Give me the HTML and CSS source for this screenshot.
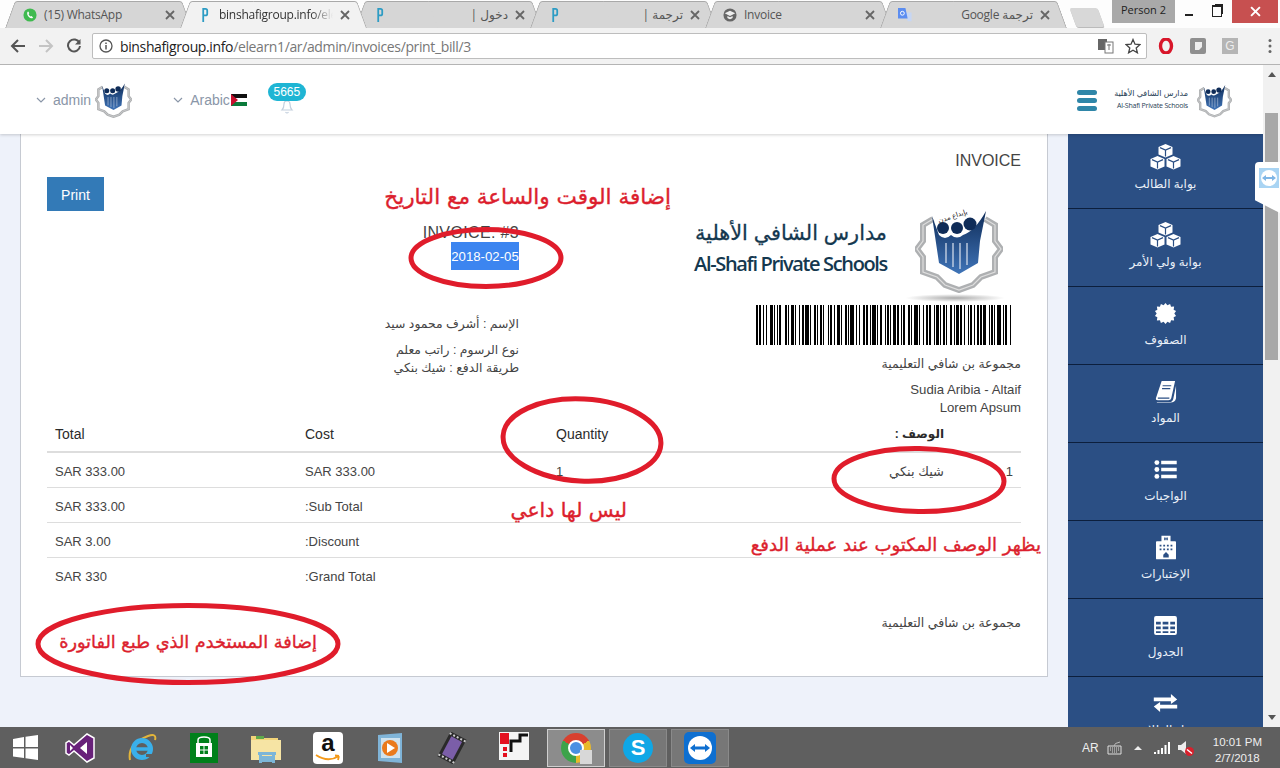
FILE: index.html
```html
<!DOCTYPE html>
<html lang="ar">
<head>
	<meta charset="UTF-8">
	<title>Invoice</title>
	<link rel="stylesheet" href="styles.css">
</head>
<body>
<svg class="defs" width="0" height="0">
	<defs>
		<linearGradient id="blueBody" x1="0" y1="0" x2="0" y2="1">
			<stop offset="0" stop-color="#0f2c58"/>
			<stop offset="1" stop-color="#3f74b8"/>
		</linearGradient>
		<symbol id="emblem" viewBox="0 0 88 88">
			<path d="M18 14L8 20V36L2 44L8 52V67L22 72L30 80L44 85L58 80L66 72L80 67V52L86 44L80 36V20L70 14" fill="none" stroke="#aeb0b2" stroke-width="6"/>
			<path d="M18 14L8 20V36L2 44L8 52V67L22 72L30 80L44 85L58 80L66 72L80 67V52L86 44L80 36V20L70 14" fill="none" stroke="#dedede" stroke-width="1.200"/>
			<path d="M17 11L24 30Q30 36 36 30Q42 35 48 30Q60 26 71 6L65 36L63 58L44 69L24 58Z" fill="url(#blueBody)"/>
			<path d="M31 38V58M38 38V62M45 38V64M52 38V60" stroke="#cfd9e8" stroke-width="1.300"/>
			<circle cx="28" cy="23" r="6" fill="#0f2c58"/>
			<circle cx="42" cy="23" r="6" fill="#0f2c58"/>
			<circle cx="55" cy="19" r="6.500" fill="#0f2c58"/>
		</symbol>
		<symbol id="cubes" viewBox="0 0 30 26">
			<path d="M15 0L22 3V10.500L15 13.500L8 10.500V3Z M7 12L14 15V22.500L7 25.500L0 22.500V15Z M23 12L30 15V22.500L23 25.500L16 22.500V15Z" fill="#fff"/>
			<path d="M9.500 3.600L15 6L20.500 3.600M15 6.200V12.500M1.500 15.600L7 18L12.500 15.600M7 18.200V24.500M17.500 15.600L23 18L28.500 15.600M23 18.200V24.500" fill="none" stroke="#2b4f84" stroke-width="1.200"/>
		</symbol>
		<symbol id="tabP" viewBox="0 0 10 18">
			<path d="M3 1V17M3 2H5.500A2 2 0 0 1 7.500 4V7.500A2 2 0 0 1 5.500 9.500H3" fill="none" stroke="#2d9cc4" stroke-width="2"/>
		</symbol>
		<symbol id="closeX" viewBox="0 0 10 10">
			<path d="M1 1L9 9M9 1L1 9" stroke="#666" stroke-width="1.800"/>
		</symbol>
	</defs>
</svg>

<div class="tabstrip">
	<div class="tabs">
		<div class="tab">
			<svg class="tab-icon" viewBox="0 0 16 16"><circle cx="8" cy="8" r="7.500" fill="#3fba4f"/><path d="M5 4.500Q4 8 7 10.500Q9.500 12.500 11.500 11L10 9L8.800 9.800Q6.800 8.500 6.300 6.800L7.200 6L6 4Z" fill="#fff"/></svg>
			<span class="tab-label">(15) WhatsApp</span>
			<svg class="tab-close"><use href="#closeX"/></svg>
		</div>
		<div class="tab tab-active">
			<svg class="tab-icon"><use href="#tabP"/></svg>
			<span class="tab-label tab-fade">binshafigroup.info/elearn1</span>
			<svg class="tab-close"><use href="#closeX"/></svg>
		</div>
		<div class="tab">
			<svg class="tab-icon"><use href="#tabP"/></svg>
			<span class="tab-label" dir="rtl">دخول |</span>
			<svg class="tab-close"><use href="#closeX"/></svg>
		</div>
		<div class="tab">
			<svg class="tab-icon"><use href="#tabP"/></svg>
			<span class="tab-label" dir="rtl">ترجمة |</span>
			<svg class="tab-close"><use href="#closeX"/></svg>
		</div>
		<div class="tab">
			<svg class="tab-icon" viewBox="0 0 16 16"><circle cx="8" cy="8" r="7.500" fill="#666"/><path d="M2 6L8 3L14 6L8 9Z" fill="#eee"/><path d="M5 9V11.500Q8 14 11 11.500V9L8 10.500Z" fill="#eee"/></svg>
			<span class="tab-label">Invoice</span>
			<svg class="tab-close"><use href="#closeX"/></svg>
		</div>
		<div class="tab">
			<svg class="tab-icon" viewBox="0 0 16 16"><path d="M8 5H15.500V15H11Z" fill="#c6d6f4"/><path d="M0 0H8.500L11 12H0Z" fill="#5c8df0"/><circle cx="5" cy="6" r="2.200" fill="none" stroke="#fff" stroke-width="1.100"/></svg>
			<span class="tab-label" dir="rtl">ترجمة Google</span>
			<svg class="tab-close"><use href="#closeX"/></svg>
		</div>
		<div class="newtab"></div>
	</div>
	<div class="window-controls">
		<span class="person">Person 2</span>
		<span class="win-btn"><i class="win-min"></i></span>
		<span class="win-btn"><i class="win-max"></i></span>
		<span class="win-close"><svg width="11" height="11" viewBox="0 0 10 10"><path d="M1 1L9 9M9 1L1 9" stroke="#fff" stroke-width="1.800"/></svg></span>
	</div>
</div>

<div class="toolbar">
	<svg class="nav-icon" viewBox="0 0 16 16"><path d="M15 8H2M8 2L2 8L8 14" fill="none" stroke="#555" stroke-width="2"/></svg>
	<svg class="nav-icon" viewBox="0 0 16 16"><path d="M1 8H14M8 2L14 8L8 14" fill="none" stroke="#c4c4c4" stroke-width="2"/></svg>
	<svg class="nav-icon" viewBox="0 0 16 16"><path d="M13.500 5A6 6 0 1 0 14 8" fill="none" stroke="#555" stroke-width="2"/><path d="M14.500 1V6.500H9Z" fill="#555"/></svg>
	<div class="omnibox">
		<svg class="info-icon" viewBox="0 0 14 14"><circle cx="7" cy="7" r="6" fill="none" stroke="#555" stroke-width="1.300"/><path d="M7 6V10.500M7 3.500V5" stroke="#555" stroke-width="1.500"/></svg>
		<span class="url"><b>binshafigroup.info</b>/elearn1/ar/admin/invoices/print_bill/3</span>
		<svg class="omni-icon" viewBox="0 0 16 16"><rect x="0" y="1" width="9" height="11" fill="#666"/><rect x="7" y="4" width="8" height="11" fill="#fff" stroke="#777"/><path d="M9 7H13M11 6V12" stroke="#777"/></svg>
		<svg class="omni-icon" viewBox="0 0 16 16"><path d="M8 1.500L10 6.200L15 6.600L11.200 9.900L12.400 14.800L8 12.200L3.600 14.800L4.800 9.900L1 6.600L6 6.200Z" fill="none" stroke="#444" stroke-width="1.300"/></svg>
	</div>
	<div class="ext-icons">
		<svg class="ext" viewBox="0 0 16 16"><ellipse cx="8" cy="8" rx="5.500" ry="7" fill="none" stroke="#d8162a" stroke-width="3.400"/></svg>
		<svg class="ext" viewBox="0 0 16 16"><rect width="16" height="16" rx="2" fill="#8f8f8f"/><path d="M5 4H12V9L9 12H5Z" fill="#eee"/></svg>
		<span class="ext-g">G</span>
		<svg class="ext-menu" viewBox="0 0 4 16"><circle cx="2" cy="2.500" r="1.500"/><circle cx="2" cy="8" r="1.500"/><circle cx="2" cy="13.500" r="1.500"/></svg>
	</div>
</div>

<div class="page">
	<div class="viewport">
		<header class="topbar">
			<div class="top-left">
				<div class="user-menu">
					<svg class="chevron" viewBox="0 0 10 6"><path d="M1 1L5 5L9 1" fill="none" stroke="#8a96a8" stroke-width="1.200"/></svg>
					<span>admin</span>
					<svg class="avatar"><use href="#emblem"/></svg>
				</div>
				<div class="lang-menu">
					<svg class="chevron" viewBox="0 0 10 6"><path d="M1 1L5 5L9 1" fill="none" stroke="#8a96a8" stroke-width="1.200"/></svg>
					<span>Arabic</span>
					<svg class="flag" viewBox="0 0 16 12"><rect width="16" height="4" fill="#111"/><rect y="4" width="16" height="4" fill="#fff"/><rect y="8" width="16" height="4" fill="#0a7a3a"/><path d="M0 0L7 6L0 12Z" fill="#c8102e"/></svg>
				</div>
				<div class="notify">
					<svg class="bell" viewBox="0 0 16 16"><path d="M3 11Q5 9 5 5Q5 2 8 2Q11 2 11 5Q11 9 13 11Z M6.500 13Q8 15 9.500 13" fill="none" stroke="#c4d0de" stroke-width="1.200"/></svg>
					<span class="badge">5665</span>
				</div>
			</div>
			<div class="top-right">
				<div class="burger"><i></i><i></i><i></i></div>
				<div class="top-logo-text">
					<span class="top-logo-ar">مدارس الشافي الأهلية</span>
					<span class="top-logo-en">Al-Shafi Private Schools</span>
				</div>
				<svg class="top-logo-mark"><use href="#emblem"/></svg>
			</div>
		</header>

		<div class="main">
			<section class="card">
				<h1 class="card-title">INVOICE</h1>
				<div class="invoice-head">
					<div class="head-left">
						<button class="print-btn">Print</button>
						<div class="invoice-meta">
							<div class="invoice-no">INVOICE: #3</div>
							<div class="invoice-date"><span>2018-02-05</span></div>
							<div class="meta-name" dir="rtl">الإسم : أشرف محمود سيد</div>
							<div class="meta-lines" dir="rtl">
								<div>نوع الرسوم : راتب معلم</div>
								<div>طريقة الدفع : شيك بنكي</div>
							</div>
						</div>
					</div>
					<div class="head-right">
						<div class="school-logo">
							<div class="school-name">
								<span class="school-ar">مدارس الشافي الأهلية</span>
								<span class="school-en">Al-Shafi Private Schools</span>
							</div>
							<svg class="school-mark" viewBox="0 0 88 86">
								<use href="#emblem" width="88" height="88"/>
								<text class="mark-motto" x="24" y="18" transform="rotate(-18 24 18)">بإبداع مدن</text>
							</svg>
						</div>
						<div class="logo-shadow"></div>
						<svg class="barcode" width="255" height="40" viewBox="0 0 255 40">
							<path d="M0 20H255" stroke="#000" stroke-width="40" fill="none" stroke-dasharray="2 1 2 2 1 2 1 3 3 1 1 2 1 1 2 4 2 1 1 2 3 1 1 3 1 2 2 1 4 1 1 3 2 1 1 2 2 1 1 4 1 1 2 2 1 2 3 1 1 3 2 1 1 1 4 2 1 2 1 3 2 1 2 2 1 1 4 1 1 2 2 3 1 1 2 1 1 2 3 1 2 2 1 1 2 3 2 1 1 2 4 1 1 3 1 2 2 1 2 3 1 1 3 1 1 2 2 1 1 3 2 2 1 1 3 1 2 2 1 3 1 1 2"/>
						</svg>
						<div class="school-group" dir="rtl">مجموعة بن شافي التعليمية</div>
						<div class="school-address">Sudia Aribia - Altaif<br>Lorem Apsum</div>
					</div>
				</div>

				<table class="items">
					<colgroup><col class="col-total"><col class="col-cost"><col class="col-qty"><col class="col-desc"><col class="col-num"></colgroup>
					<thead>
						<tr><th>Total</th><th>Cost</th><th>Quantity</th><th class="cell-right" dir="rtl">الوصف :</th><th></th></tr>
					</thead>
					<tbody>
						<tr><td>SAR 333.00</td><td>SAR 333.00</td><td>1</td><td class="cell-right" dir="rtl">شيك بنكي</td><td class="cell-end">1</td></tr>
						<tr><td>SAR 333.00</td><td>:Sub Total</td><td></td><td></td><td></td></tr>
						<tr><td>SAR 3.00</td><td>:Discount</td><td></td><td></td><td></td></tr>
						<tr class="row-last"><td>SAR 330</td><td>:Grand Total</td><td></td><td></td><td></td></tr>
					</tbody>
				</table>
				<div class="card-foot" dir="rtl">مجموعة بن شافي التعليمية</div>
			</section>

			<nav class="sidebar">
				<a class="side-item"><span class="side-glyph"><svg width="31" height="26"><use href="#cubes"/></svg></span><span class="side-label">بوابة الطالب</span></a>
				<a class="side-item"><span class="side-glyph"><svg width="31" height="26"><use href="#cubes"/></svg></span><span class="side-label">بوابة ولي الأمر</span></a>
				<a class="side-item"><span class="side-glyph"><svg width="23" height="23" viewBox="0 0 24 24"><path d="M12 1L14 3.500L16.800 2L17.800 5L21 4.800L20.500 8L23 9.500L21.200 12L23 14.500L20.500 16L21 19.200L17.800 19L16.800 22L14 20.500L12 23L10 20.500L7.200 22L6.200 19L3 19.200L3.500 16L1 14.500L2.800 12L1 9.500L3.500 8L3 4.800L6.200 5L7.200 2L10 3.500Z" fill="#fff"/></svg></span><span class="side-label">الصفوف</span></a>
				<a class="side-item"><span class="side-glyph"><svg width="23" height="23" viewBox="0 0 24 24"><path d="M8 1H22L18 19Q17.500 21 15 21H4Q1.500 21 2 19Z" fill="#fff"/><path d="M3 23H16Q19 23 20 20L23 6V19Q22 23.500 17 23.500H3Z" fill="#fff"/><path d="M9 6H18M8.400 9H17M4 19H16" stroke="#2b4f84" stroke-width="1.300"/></svg></span><span class="side-label">المواد</span></a>
				<a class="side-item"><span class="side-glyph"><svg width="25" height="19" viewBox="0 0 26 22"><circle cx="3" cy="3" r="2.800" fill="#fff"/><circle cx="3" cy="11" r="2.800" fill="#fff"/><circle cx="3" cy="19" r="2.800" fill="#fff"/><path d="M8 1H26V5H8ZM8 9H26V13H8ZM8 17H26V21H8Z" fill="#fff"/></svg></span><span class="side-label">الواجبات</span></a>
				<a class="side-item"><span class="side-glyph"><svg width="20" height="25" viewBox="0 0 22 26"><path fill-rule="evenodd" fill="#fff" d="M6 0H16V6H21Q22 6 22 7V25Q22 26 21 26H1Q0 26 0 25V7Q0 6 1 6H6Z M8 21V24H14V21L11 18Z M4 10V12H6V10Z M8 10V12H10V10Z M12 10V12H14V10Z M16 10V12H18V10Z M4 14V16H6V14Z M8 14V16H10V14Z M12 14V16H14V14Z M16 14V16H18V14Z M9 2V5H10.500V4H11.500V5H13V2H11.500V3H10.500V2Z"/></svg></span><span class="side-label">الإختبارات</span></a>
				<a class="side-item"><span class="side-glyph"><svg width="23" height="19" viewBox="0 0 24 20"><path fill-rule="evenodd" fill="#fff" d="M2 0H22Q24 0 24 2V18Q24 20 22 20H2Q0 20 0 18V2Q0 0 2 0Z M2 6V9H7V6Z M9 6V9H15V6Z M17 6V9H22V6Z M2 11V14H7V11Z M9 11V14H15V11Z M17 11V14H22V11Z M2 16V18H7V16Z M9 16V18H15V16Z M17 16V18H22V16Z"/></svg></span><span class="side-label">الجدول</span></a>
				<a class="side-item"><span class="side-glyph"><svg width="25" height="18" viewBox="0 0 26 20"><path d="M0 4H19V0L26 6L19 11V8H0ZM26 12H7V9L0 14L7 20V16H26Z" fill="#fff"/></svg></span><span class="side-label">نقل الطلاب</span></a>
			</nav>
		</div>
	</div>
	<div class="scrollbar">
		<span class="arrow-up"></span>
		<div class="thumb"></div>
		<span class="arrow-down"></span>
	</div>
</div>

<div class="taskbar">
	<div class="task-start">
		<svg width="25" height="25" viewBox="0 0 25 25"><path d="M0 4L11 2V12H0ZM12.500 1.800L25 0V12H12.500ZM0 13.500H11V23L0 21.500ZM12.500 13.500H25V25L12.500 23.200Z" fill="#fff"/></svg>
	</div>
	<div class="task"><svg width="30" height="32" viewBox="0 0 30 32"><path d="M22 2L29 6V26L22 30L9 19L4 23L1 21V11L4 9L9 13Z" fill="#68217a" stroke="#fff" stroke-width="1.500"/><path d="M22 10L15 16L22 22ZM5 13V19L8 16Z" fill="#fff"/></svg></div>
	<div class="task"><svg width="32" height="32" viewBox="0 0 32 32"><path d="M4 28Q1 12 22 4Q31 1 29 8" fill="none" stroke="#e3b53a" stroke-width="2"/><circle cx="16" cy="17" r="8.500" fill="none" stroke="#3ab0ea" stroke-width="5"/><path d="M9 17H25" stroke="#3ab0ea" stroke-width="3.500"/><path d="M20 22H28V25H20Z" fill="#5f5f5f"/></svg></div>
	<div class="task"><svg width="28" height="30" viewBox="0 0 28 30"><rect width="28" height="30" fill="#00801a"/><path d="M8 11V7Q8 4 14 4Q20 4 20 7V11" fill="none" stroke="#fff" stroke-width="1.500"/><path d="M6 10H22V24H6Z" fill="#fff"/><path d="M10 13H13.500V16.500H10ZM14.500 13H18V16.500H14.500ZM10 17.500H13.500V21H10ZM14.500 17.500H18V21H14.500Z" fill="#00801a"/></svg></div>
	<div class="task"><svg width="32" height="32" viewBox="0 0 32 32"><path d="M1 4H12L14 6H28V14H1Z" fill="#f2d479"/><path d="M1 8H31V28H1Z" fill="#f6e4a4"/><path d="M6 4H14V7H6Z" fill="#5ea94b"/><path d="M8 20H26V23H8ZM9 23H12V31H9ZM22 23H25V31H22ZM12 24H22V30H12Z" fill="#7cb6d8"/></svg></div>
	<div class="task"><div class="amazon-tile"><span>a</span><svg width="26" height="8" viewBox="0 0 26 8"><path d="M1 1Q13 9 24 2M24 2L20 1.500M24 2L23 6" fill="none" stroke="#f49a1a" stroke-width="1.800"/></svg></div></div>
	<div class="task"><svg width="28" height="32" viewBox="0 0 28 32"><path d="M2 3L26 1V31L2 29Z" fill="#7fb4d8"/><path d="M5 6H24V26H5Z" fill="#cfe2ee"/><circle cx="14" cy="16" r="8" fill="#ea7a1c"/><path d="M11 11L19 16L11 21Z" fill="#fff"/></svg></div>
	<div class="task"><svg width="30" height="32" viewBox="0 0 30 32"><g transform="rotate(28 15 16)"><rect x="6" y="2" width="18" height="28" fill="#2a2a2a"/><path d="M9 6H21V26H9Z" fill="#7b5ea8"/><path d="M6 4H24M6 28H24" stroke="#ccc" stroke-width="2" stroke-dasharray="2 2"/></g></svg></div>
	<div class="task"><svg width="30" height="32" viewBox="0 0 30 32"><rect width="30" height="28" fill="#f4f4f4"/><path d="M1 1H10V12H1ZM4 15H8V19H4ZM4 21H8V25H4Z" fill="#e4101f"/><path d="M12 20V9H21V3H29" fill="none" stroke="#111" stroke-width="3"/></svg></div>
	<div class="task task-active"><div class="chrome-mark"><i></i></div><span class="chrome-user"></span></div>
	<div class="task task-open"><div class="skype-mark">S</div></div>
	<div class="task task-open"><svg width="32" height="32" viewBox="0 0 32 32"><rect width="32" height="32" rx="5" fill="#0e6fd0"/><circle cx="16" cy="16" r="12" fill="#fff"/><path d="M6 16L11 12V14.500H21V12L26 16L21 20V17.500H11V20Z" fill="#0e6fd0"/></svg></div>
	<div class="tray">
		<span class="tray-lang">AR</span>
		<svg width="15" height="14" viewBox="0 0 15 14"><path d="M1 5H14V13H1Z" fill="none" stroke="#ddd"/><path d="M3 7H12M3 9H12M5 11H10" stroke="#ddd" stroke-dasharray="1 1"/><path d="M7 5Q7 2 13 1" fill="none" stroke="#bbb"/></svg>
		<span class="tray-caret"></span>
		<svg width="16" height="12" viewBox="0 0 16 12"><path d="M0 10H2V12H0ZM3.500 8H5.500V12H3.500ZM7 6H9V12H7ZM10.500 3H12.500V12H10.500ZM14 0H16V12H14Z" fill="#fff"/></svg>
		<svg width="16" height="16" viewBox="0 0 16 16"><path d="M0 5H3L8 1V14L3 10H0Z" fill="#eee"/><circle cx="11.500" cy="11.500" r="4.500" fill="#d8202c"/><path d="M9 9.500L14 13.500" stroke="#fff" stroke-width="1.500"/></svg>
		<div class="clock"><div>10:01 PM</div><div>2/7/2018</div></div>
	</div>
</div>

<div class="tv-tab"><svg width="20" height="20" viewBox="0 0 20 20"><rect width="20" height="20" fill="#a9d4f3"/><circle cx="10" cy="10" r="8" fill="#fff"/><path d="M3 10L7 7V9H13V7L17 10L13 13V11H7V13Z" fill="#7fb6e6"/></svg></div>

<svg class="marks" width="1280" height="768" viewBox="0 0 1280 768">
	<ellipse cx="486" cy="258" rx="75" ry="28.500"/>
	<ellipse cx="582" cy="440" rx="79" ry="41" transform="rotate(3 582 440)"/>
	<ellipse cx="919" cy="480" rx="85" ry="31.500" transform="rotate(1 919 480)"/>
	<ellipse cx="188" cy="644" rx="150" ry="38.500"/>
</svg>
<div class="note note-date" dir="rtl">إضافة الوقت والساعة مع التاريخ</div>
<div class="note note-qty" dir="rtl">ليس لها داعي</div>
<div class="note note-desc" dir="rtl">يظهر الوصف المكتوب عند عملية الدفع</div>
<div class="note note-user" dir="rtl">إضافة المستخدم الذي طبع الفاتورة</div>
</body>
</html>
```

FILE: styles.css
```css
html,body{margin:0;padding:0;}
body{width:1280px;height:768px;overflow:hidden;position:relative;display:flex;flex-direction:column;background:#fff;font-family:"Liberation Sans","DejaVu Sans",sans-serif;color:#444;}
.defs{position:absolute;}
h1{margin:0;font-weight:normal;}
svg{display:block;flex:none;}

/* browser tabs */
.tabstrip{height:28px;flex:none;display:flex;justify-content:space-between;background:#fdfdfd;}
.tabs{display:flex;align-items:flex-end;padding-left:5px;}
.tab{position:relative;width:187px;height:27px;margin-right:-12px;padding:0 17px 0 18px;box-sizing:border-box;display:flex;align-items:center;gap:7px;font:12px "Open Sans","DejaVu Sans",sans-serif;letter-spacing:-.25px;color:#555;z-index:1;}
.tab:before,.tab:after{content:'';position:absolute;top:0;bottom:0;width:55%;background:#d6d6d6;border-top:1px solid #a9a9a9;z-index:-1;}
.tab:before{left:0;border-left:1px solid #a9a9a9;transform:skewX(-20deg);transform-origin:0 100%;border-radius:3px 0 0 0;}
.tab:after{right:0;border-right:1px solid #a9a9a9;transform:skewX(20deg);transform-origin:100% 100%;border-radius:0 3px 0 0;}
.tab-active{z-index:2;color:#333;}
.tab-active:before,.tab-active:after{background:#f2f2f2;}
.tab-icon{width:14px;height:16px;}
.tab-label{flex:1;overflow:hidden;white-space:nowrap;}
.tab-fade{-webkit-mask-image:linear-gradient(to left,transparent,#000 22px);mask-image:linear-gradient(to left,transparent,#000 22px);}
.tab-close{width:10px;height:10px;}
.newtab{width:28px;height:19px;margin-left:18px;margin-bottom:1px;background:#d8d8d8;border-radius:2px;transform:skewX(20deg);box-shadow:0 1px 0 #bbb;}
.window-controls{display:flex;align-items:flex-start;padding-right:2px;}
.person{width:63px;height:23px;background:#a9a9a9;color:#222;font:11px/20px "Open Sans",sans-serif;text-align:center;}
.win-btn{width:28px;height:21px;display:flex;align-items:center;justify-content:center;}
.win-btn+.win-btn{margin-right:1px;}
.win-min{display:block;width:8px;height:2px;background:#222;margin-top:8px;}
.win-max{display:block;width:8px;height:9px;border:1px solid #222;border-top-width:2px;box-shadow:2px -2px 0 -1px #222;}
.win-close{width:46px;height:23px;background:#c75050;display:flex;align-items:center;justify-content:center;}

/* toolbar */
.toolbar{height:37px;flex:none;box-sizing:border-box;display:flex;align-items:center;padding:0 0 0 10px;background:#f2f2f2;border-bottom:1px solid #b4b4b4;}
.nav-icon{width:16px;height:16px;margin-right:12px;}
.omnibox{width:1055px;height:26px;margin-left:-2px;box-sizing:border-box;display:flex;align-items:center;background:#fff;border:1px solid #bdbdbd;border-radius:2px;padding:0 5px 0 6px;gap:11px;}
.info-icon{width:14px;height:14px;margin-right:-4px;}
.url{flex:1;font:14px "Open Sans","DejaVu Sans",sans-serif;letter-spacing:-.37px;color:#777;white-space:nowrap;}
.url b{font-weight:normal;color:#222;}
.omni-icon{width:16px;height:16px;}
.ext-icons{flex:1;display:flex;align-items:center;padding-left:11px;gap:16px;}
.ext{width:16px;height:16px;}
.ext-g{width:16px;height:16px;background:#b5b5b5;color:#eee;font:12px/16px "Liberation Sans",sans-serif;text-align:center;}
.ext-menu{width:4px;height:16px;margin-left:14px;fill:#666;}

/* page */
.page{height:662px;flex:none;display:flex;}
.viewport{flex:1;display:flex;flex-direction:column;overflow:hidden;background:#eef2fa;}
.topbar{height:69px;flex:none;position:relative;z-index:2;display:flex;justify-content:space-between;align-items:center;background:#fff;box-shadow:0 1px 3px rgba(0,0,0,.18);}
.top-left{display:flex;align-items:center;padding-left:36px;font-size:14px;color:#8a96a8;}
.user-menu,.lang-menu{display:flex;align-items:center;}
.chevron{width:10px;height:6px;margin-right:7px;}
.avatar{width:37px;height:37px;margin-left:4px;}
.lang-menu{margin-left:41px;}
.flag{width:16px;height:12px;margin-left:1px;}
.notify{position:relative;width:38px;height:30px;margin-left:21px;}
.badge{position:absolute;left:0;top:-2px;width:38px;height:18px;border-radius:9px;background:#1fb5d4;color:#fff;font-size:12px;line-height:18px;text-align:center;}
.bell{position:absolute;left:11px;top:14px;width:16px;height:16px;}
.top-right{display:flex;align-items:center;padding-right:31px;}
.burger{display:flex;flex-direction:column;gap:3px;width:20px;margin:2px 19px 0 0;}
.burger i{display:block;height:5px;border-radius:3px;background:#2f86a8;}
.top-logo-text{display:flex;flex-direction:column;align-items:flex-end;width:72px;margin-right:9px;color:#1f3d55;white-space:nowrap;}
.top-logo-ar{font-size:8px;line-height:12px;}
.top-logo-en{font:7px/12px "Open Sans",sans-serif;letter-spacing:-.2px;}
.top-logo-mark{width:35px;height:36px;}

.main{flex:1;display:flex;align-items:flex-start;padding-left:20px;gap:20px;min-height:0;}
.card{width:1028px;height:543px;box-sizing:border-box;padding:16px 26px 0;background:#fff;border:1px solid #c6cad2;border-top:none;}
.card-title{padding-top:2px;font-size:16px;line-height:18px;text-align:right;}
.invoice-head{display:flex;}
.head-left{width:472px;flex:none;display:flex;justify-content:space-between;align-items:flex-start;}
.print-btn{width:57px;height:34px;margin-top:7px;padding:2px 0 0;background:#337ab7;border:none;color:#fff;font:14px "Liberation Sans",sans-serif;}
.invoice-meta{padding-top:52px;text-align:right;font-size:13.200px;}
.invoice-no{padding-top:2px;font-size:16px;line-height:18px;letter-spacing:.35px;white-space:nowrap;}
.invoice-date{height:28px;}
.invoice-date span{display:inline-block;width:68px;height:28px;padding-top:2px;box-sizing:border-box;line-height:26px;background:#3c85f0;color:#fff;text-align:center;vertical-align:top;white-space:nowrap;}
.meta-name{margin-top:44px;line-height:20px;font-size:12.400px;}
.meta-lines{margin-top:7px;line-height:18px;font-size:12.400px;}
.head-right{flex:1;display:flex;flex-direction:column;align-items:flex-end;font-size:13.200px;}
.school-logo{display:flex;align-items:flex-start;padding:35px 18px 0 0;}
.school-name{display:flex;flex-direction:column;align-items:flex-end;width:192px;margin:13px 28px 0 0;color:#14384f;white-space:nowrap;}
.school-ar{font-size:20.800px;line-height:30px;-webkit-text-stroke:.3px #14384f;}
.school-en{font:600 20px/32px "Open Sans",sans-serif;letter-spacing:-1.350px;}
.school-mark{width:88px;height:86px;overflow:visible;}
.mark-motto{font-size:7px;fill:#222;}
.logo-shadow{width:100px;height:8px;margin:3px 16px 0 0;border-radius:50%;background:radial-gradient(ellipse at center,#aaa,rgba(255,255,255,0) 70%);}
.barcode{margin:3px 10px 0 0;}
.school-group{margin-top:10px;line-height:18px;font-size:12.500px;width:100%;}
.school-address{margin-top:8px;line-height:18px;text-align:right;}

.items{width:974px;table-layout:fixed;border-collapse:separate;border-spacing:0;font-size:13px;}
.col-total{width:250px;}
.col-cost{width:251px;}
.col-qty{width:253px;}
.col-desc{width:151px;}
.items th{height:36px;box-sizing:border-box;padding:0 8px 0;font-size:14px;font-weight:normal;color:#2b2b2b;text-align:left;border-bottom:2px solid #ddd;}
.items td{height:35px;box-sizing:border-box;padding:2px 8px 0;border-bottom:1px solid #ddd;}
.items .row-last td{border-bottom:none;}
.items .cell-right{text-align:right;font-size:13px;}
.items th.cell-right{font-weight:bold;font-size:12px;}
.items .cell-end{text-align:right;}
.card-foot{margin-top:21px;line-height:18px;font-size:12.500px;}

/* side menu */
.sidebar{width:195px;flex:none;height:593px;overflow:hidden;background:#2b4f84;}
.side-item{display:flex;flex-direction:column;align-items:center;height:78px;box-sizing:border-box;padding-top:13px;border-bottom:1px solid #0c1f3d;color:#eaf0f8;font-size:12px;}
.side-item:first-child{margin-top:-3px;}
.side-glyph{height:26px;display:flex;align-items:center;}
.side-label{margin-top:5px;line-height:18px;}

.scrollbar{width:17px;flex:none;position:relative;background:#f1f1f1;}
.thumb{position:absolute;left:2px;top:48px;width:13px;height:247px;background:#a8a8a8;}
.arrow-up,.arrow-down{position:absolute;left:5px;width:0;height:0;border-left:4px solid transparent;border-right:4px solid transparent;}
.arrow-up{top:7px;border-bottom:5px solid #555;}
.arrow-down{bottom:7px;border-top:5px solid #555;}

/* taskbar */
.taskbar{height:41px;flex:none;box-sizing:border-box;display:flex;align-items:center;gap:4px;background:#5f5f5f;color:#eee;}
.task-start{width:47px;display:flex;justify-content:center;padding-left:4px;box-sizing:border-box;}
.task{position:relative;width:58px;height:38px;box-sizing:border-box;display:flex;align-items:center;justify-content:center;}
.task-active{background:#8c8c8c;border:1px solid #cfcfcf;}
.task-open{background:#777;border:1px solid #8a8a8a;}
.amazon-tile{width:30px;height:32px;border-radius:4px;background:#fff;color:#111;display:flex;flex-direction:column;align-items:center;font:bold 24px/22px "Liberation Sans",sans-serif;}
.chrome-mark{width:30px;height:30px;border-radius:50%;background:conic-gradient(from -60deg,#d8402f 0 120deg,#e8b92c 120deg 240deg,#3da34a 240deg 360deg);display:flex;align-items:center;justify-content:center;}
.chrome-mark i{display:block;width:12px;height:12px;border-radius:50%;background:#4a90e2;border:2px solid #fff;}
.chrome-user{position:absolute;right:12px;bottom:2px;width:12px;height:14px;background:#d8d8d8;}
.skype-mark{width:30px;height:30px;border-radius:50%;background:#0fa7e6;color:#fff;font:bold 22px/30px "Liberation Sans",sans-serif;text-align:center;}
.tray{margin-left:auto;display:flex;align-items:center;padding-right:18px;font-size:12px;}
.tray-lang{margin-right:8px;}
.tray-caret{width:0;height:0;margin:0 12px;border-left:4px solid transparent;border-right:4px solid transparent;border-bottom:4px solid #eee;}
.tray svg+.tray-caret+svg{margin-right:8px;}
.clock{margin-left:19px;padding-top:4px;line-height:16px;font-size:11.500px;text-align:center;}

/* overlays */
.tv-tab{position:absolute;left:1255px;top:162px;width:25px;height:51px;padding:6px 0 0 4px;box-sizing:border-box;background:#fff;border-radius:4px 0 0 0;clip-path:polygon(0 0,100% 0,100% 100%,0 75%);}
.marks{position:absolute;left:0;top:0;pointer-events:none;fill:none;stroke:#e01c2b;stroke-width:5;}
.note{position:absolute;color:#dc1f2e;white-space:nowrap;font-family:"DejaVu Sans",sans-serif;-webkit-text-stroke:.4px #dc1f2e;}
.note-date{right:609px;top:178px;font-size:21.500px;line-height:38px;}
.note-qty{right:653px;top:492px;font-size:20.300px;line-height:36px;}
.note-desc{right:239px;top:528px;font-size:18.100px;line-height:34px;}
.note-user{right:963px;top:626px;font-size:17.700px;line-height:32px;}
```
